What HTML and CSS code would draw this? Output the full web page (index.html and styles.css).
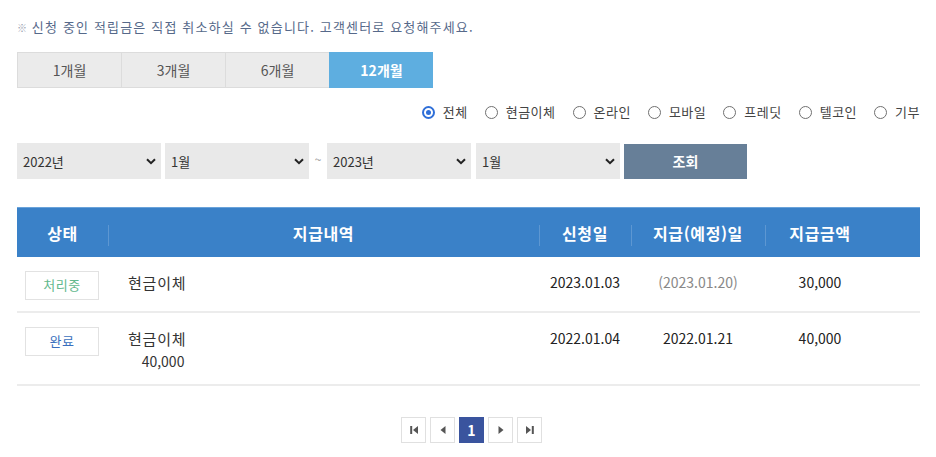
FILE: index.html
```html
<!DOCTYPE html>
<html lang="ko">
<head>
<meta charset="utf-8">
<link rel="stylesheet" href="styles.css">
</head>
<body>
<div class="wrap">
  <p class="notice"><span class="mark">※</span> 신청 중인 적립금은 직접 취소하실 수 없습니다. 고객센터로 요청해주세요.</p>

  <div class="tabs">
    <button class="tab">1개월</button>
    <button class="tab">3개월</button>
    <button class="tab">6개월</button>
    <button class="tab active">12개월</button>
  </div>

  <div class="radios">
    <label class="radio"><span class="dot checked"></span>전체</label>
    <label class="radio"><span class="dot"></span>현금이체</label>
    <label class="radio"><span class="dot"></span>온라인</label>
    <label class="radio"><span class="dot"></span>모바일</label>
    <label class="radio"><span class="dot"></span>프레딧</label>
    <label class="radio"><span class="dot"></span>텔코인</label>
    <label class="radio"><span class="dot"></span>기부</label>
  </div>

  <div class="filters">
    <div class="sel"><select><option>2022년</option></select><svg class="chev" width="10" height="7" viewBox="0 0 10 7"><path d="M1 1.2 5 5.2 9 1.2" fill="none" stroke="#222" stroke-width="2"/></svg></div>
    <div class="sel gap4"><select><option>1월</option></select><svg class="chev" width="10" height="7" viewBox="0 0 10 7"><path d="M1 1.2 5 5.2 9 1.2" fill="none" stroke="#222" stroke-width="2"/></svg></div>
    <span class="tilde">~</span>
    <div class="sel"><select><option>2023년</option></select><svg class="chev" width="10" height="7" viewBox="0 0 10 7"><path d="M1 1.2 5 5.2 9 1.2" fill="none" stroke="#222" stroke-width="2"/></svg></div>
    <div class="sel gap5"><select><option>1월</option></select><svg class="chev" width="10" height="7" viewBox="0 0 10 7"><path d="M1 1.2 5 5.2 9 1.2" fill="none" stroke="#222" stroke-width="2"/></svg></div>
    <button class="search">조회</button>
  </div>

  <div class="table">
    <div class="row head">
      <div class="c"><span>상태</span></div>
      <div class="c div"><span>지급내역</span></div>
      <div class="c div"><span>신청일</span></div>
      <div class="c div"><span>지급(예정)일</span></div>
      <div class="c div"><span>지급금액</span></div>
      <div class="c"></div>
    </div>
    <div class="row body">
      <div class="c"><span class="badge ing">처리중</span></div>
      <div class="c left"><div class="desc">현금이체</div></div>
      <div class="c num">2023.01.03</div>
      <div class="c num muted">(2023.01.20)</div>
      <div class="c num">30,000</div>
      <div class="c"></div>
    </div>
    <div class="row body">
      <div class="c"><span class="badge done">완료</span></div>
      <div class="c left"><div class="desc">현금이체<span class="amt">40,000</span></div></div>
      <div class="c num">2022.01.04</div>
      <div class="c num">2022.01.21</div>
      <div class="c num">40,000</div>
      <div class="c"></div>
    </div>
  </div>

  <div class="pager">
    <a class="pg"><svg width="10" height="10" viewBox="0 0 10 10"><rect x="1.2" y="1" width="2" height="8" fill="#555"/><path d="M9 1 4 5 9 9Z" fill="#555"/></svg></a>
    <a class="pg"><svg width="10" height="10" viewBox="0 0 10 10"><path d="M7.5 1 2.5 5 7.5 9Z" fill="#555"/></svg></a>
    <a class="pg on">1</a>
    <a class="pg"><svg width="10" height="10" viewBox="0 0 10 10"><path d="M2.5 1 7.5 5 2.5 9Z" fill="#555"/></svg></a>
    <a class="pg"><svg width="10" height="10" viewBox="0 0 10 10"><path d="M1 1 6 5 1 9Z" fill="#555"/><rect x="6.8" y="1" width="2" height="8" fill="#555"/></svg></a>
  </div>
</div>
</body>
</html>
```
FILE: styles.css
```css
* { box-sizing: border-box; }
html, body { margin: 0; padding: 0; background: #fff; }
body {
  font-family: "Noto Sans CJK KR", "Noto Sans", sans-serif;
  color: #333;
}
.wrap { width: 936px; padding: 17px 16px 0 17px; }

.notice {
  margin: 0;
  font-size: 13px;
  line-height: 20px;
  color: #56698a;
  letter-spacing: 1.17px;
}
.notice .mark { font-size: 10px; color: #9aa3b0; letter-spacing: 0; }

.tabs { display: flex; margin-top: 14px; width: 416px; }
.tab {
  width: 104px;
  height: 36px;
  border: 1px solid #dcdcdc;
  border-right: none;
  background: #ebebeb;
  font-family: inherit;
  font-size: 14px;
  color: #555;
  padding: 0;
}
.tab:first-child { border-left: 1px solid #dcdcdc; }
.tab.active {
  background: #5eaee0;
  border-color: #5eaee0;
  color: #fff;
  font-weight: bold;
}

.radios {
  display: flex;
  justify-content: flex-end;
  gap: 17px;
  margin-top: 14px;
  height: 20px;
  align-items: center;
}
.radio {
  display: flex;
  align-items: center;
  gap: 8px;
  font-size: 13px;
  line-height: 20px;
  color: #444;
  letter-spacing: 0.5px;
}
.dot {
  width: 13px;
  height: 13px;
  border: 1px solid #707070;
  border-radius: 50%;
  display: inline-flex;
  align-items: center;
  justify-content: center;
}
.dot.checked { border: 2px solid #2f6fd8; }
.dot.checked::after {
  content: "";
  width: 5px;
  height: 5px;
  border-radius: 50%;
  background: #2f6fd8;
}

.filters {
  display: flex;
  align-items: center;
  margin-top: 21px;
  height: 36px;
}
.sel { position: relative; width: 144px; height: 36px; }
.sel.gap4 { margin-left: 4px; }
.sel.gap5 { margin-left: 5px; }
.sel select {
  appearance: none;
  -webkit-appearance: none;
  width: 100%;
  height: 100%;
  border: none;
  background: #e9e9e9;
  font-family: inherit;
  font-size: 13px;
  color: #333;
  padding: 0 0 0 6px;
  border-radius: 0;
  outline: none;
}
.chev { position: absolute; right: 5px; top: 15px; pointer-events: none; }
.tilde {
  width: 18px;
  text-align: center;
  font-size: 12px;
  color: #999;
  margin-top: -6px;
}
.search {
  margin-left: 4px;
  width: 123px;
  height: 35px;
  border: none;
  background: #677f98;
  color: #fff;
  font-family: inherit;
  font-size: 14px;
  font-weight: bold;
}

.table { margin-top: 28px; width: 903px; }
.row {
  display: grid;
  grid-template-columns: 91px 431px 92px 134px 110px 1fr;
}
.head {
  background: #3a81c8;
  border-top: 1px solid #6aa3da;
  height: 50px;
  color: #fff;
  font-weight: bold;
  font-size: 16px;
  letter-spacing: 0.6px;
}
.head .c {
  display: flex;
  align-items: center;
  justify-content: center;
  position: relative;
}
.head .c.div::before {
  content: "";
  position: absolute;
  left: 0;
  top: 17px;
  height: 21px;
  width: 1px;
  background: rgba(255,255,255,0.18);
}
.body {
  border-bottom: 2px solid #ececec;
  padding: 14px 0 11px;
  font-size: 14px;
  line-height: 23px;
}
.body .c { text-align: center; }
.body .c.left { text-align: left; padding-left: 20px; }
.desc {
  display: inline-block;
  font-size: 15px;
  color: #333;
  letter-spacing: 0.8px;
}
.amt { display: block; text-align: right; font-size: 14px; line-height: 23px; padding-right: 2px; letter-spacing: 0; }
.num { color: #222; }
.num.muted { color: #888; }
.badge {
  display: inline-block;
  width: 74px;
  height: 29px;
  border: 1.5px solid #e2e2e2;
  margin-left: 8px;
  font-size: 13px;
  line-height: 26px;
  text-align: center;
  letter-spacing: 0.5px;
}
.badge.ing { color: #62b98e; }
.badge.done { color: #3a6fbd; }
.body .c:first-child { text-align: left; }

.pager {
  display: flex;
  justify-content: center;
  gap: 4px;
  margin-top: 31px;
  padding-left: 6px;
}
.pg {
  width: 25px;
  height: 26px;
  border: 1px solid #e0e0e0;
  background: #fff;
  display: flex;
  align-items: center;
  justify-content: center;
  font-size: 14px;
  font-weight: bold;
}
.pg.on { background: #3a549e; border-color: #3a549e; color: #fff; }
```
